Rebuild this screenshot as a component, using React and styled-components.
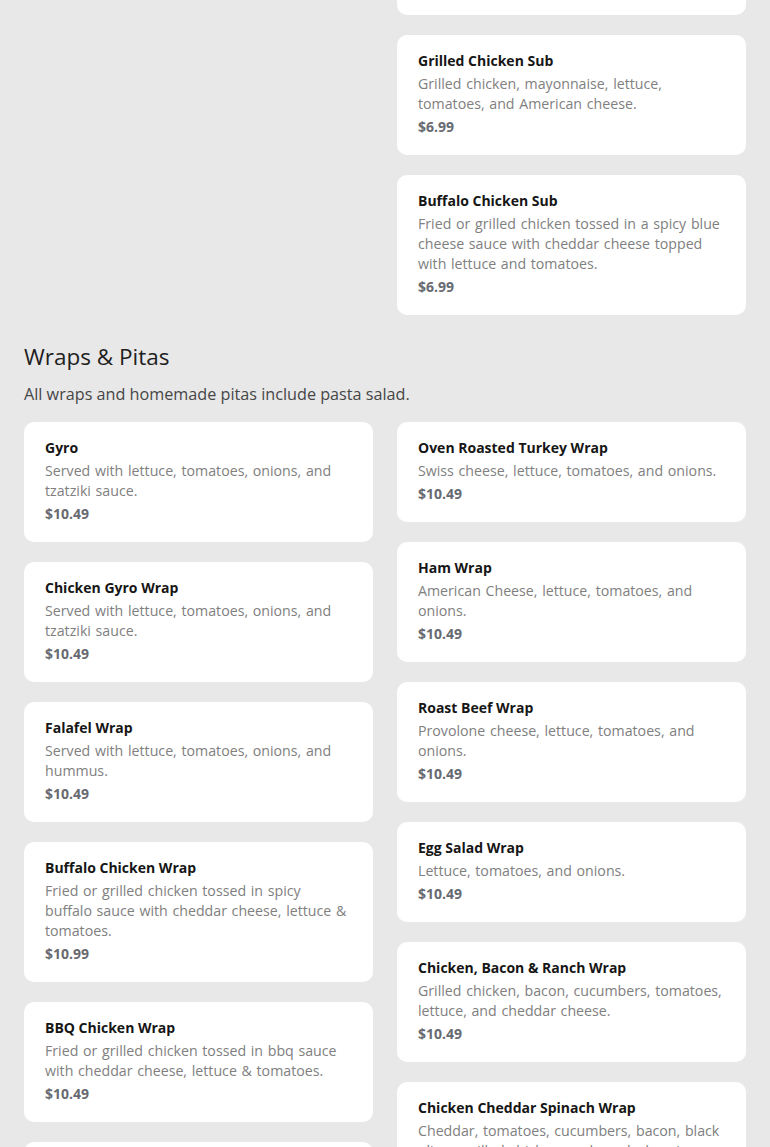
import React from 'react';
import styled, { createGlobalStyle } from 'styled-components';

const GlobalStyle = createGlobalStyle`
  html, body {
    margin: 0;
    padding: 0;
    background: #e8e8e8;
    font-family: "Open Sans", "Liberation Sans", sans-serif;
    overflow: hidden;
  }
`;

const sections = [
  {
    title: 'Subs',
    note: 'All subs include chips.',
    left: [
      { name: 'Turkey Sub', desc: 'Turkey, lettuce, tomatoes, and onions.', price: '$6.99' },
      { name: 'Ham Sub', desc: 'Ham, lettuce, tomatoes, and onions.', price: '$6.99' },
    ],
    right: [
      { name: 'Philly Cheesesteak Sub', desc: 'Steak, grilled onions, peppers, and provolone cheese.', price: '$7.49' },
      { name: 'Italian Sub', desc: 'Ham, salami, pepperoni, and provolone.', price: '$6.99' },
      { name: 'Grilled Chicken Sub', desc: 'Grilled chicken, mayonnaise, lettuce, tomatoes, and American cheese.', price: '$6.99' },
      { name: 'Buffalo Chicken Sub', desc: 'Fried or grilled chicken tossed in a spicy blue cheese sauce with cheddar cheese topped with lettuce and tomatoes.', price: '$6.99' },
    ],
  },
  {
    title: 'Wraps & Pitas',
    note: 'All wraps and homemade pitas include pasta salad.',
    left: [
      { name: 'Gyro', desc: 'Served with lettuce, tomatoes, onions, and tzatziki sauce.', price: '$10.49' },
      { name: 'Chicken Gyro Wrap', desc: 'Served with lettuce, tomatoes, onions, and tzatziki sauce.', price: '$10.49' },
      { name: 'Falafel Wrap', desc: 'Served with lettuce, tomatoes, onions, and hummus.', price: '$10.49' },
      { name: 'Buffalo Chicken Wrap', desc: 'Fried or grilled chicken tossed in spicy buffalo sauce with cheddar cheese, lettuce & tomatoes.', price: '$10.99' },
      { name: 'BBQ Chicken Wrap', desc: 'Fried or grilled chicken tossed in bbq sauce with cheddar cheese, lettuce & tomatoes.', price: '$10.49' },
      { name: 'Chicken Caesar Wrap', desc: 'Grilled chicken, romaine, parmesan, and caesar dressing.', price: '$10.49' },
    ],
    right: [
      { name: 'Oven Roasted Turkey Wrap', desc: 'Swiss cheese, lettuce, tomatoes, and onions.', price: '$10.49' },
      { name: 'Ham Wrap', desc: 'American Cheese, lettuce, tomatoes, and onions.', price: '$10.49' },
      { name: 'Roast Beef Wrap', desc: 'Provolone cheese, lettuce, tomatoes, and onions.', price: '$10.49' },
      { name: 'Egg Salad Wrap', desc: 'Lettuce, tomatoes, and onions.', price: '$10.49' },
      { name: 'Chicken, Bacon & Ranch Wrap', desc: 'Grilled chicken, bacon, cucumbers, tomatoes, lettuce, and cheddar cheese.', price: '$10.49' },
      { name: 'Chicken Cheddar Spinach Wrap', desc: 'Cheddar, tomatoes, cucumbers, bacon, black olives, grilled chicken, and ranch dressing.', price: '$10.49' },
    ],
  },
];

// page is shown scrolled part way down the menu
const Page = styled.main`
  margin-top: -306px;
  padding: 0 24px;
  display: flex;
  flex-direction: column;
  gap: 26px;
`;

const Section = styled.section`
  display: flex;
  flex-direction: column;
`;

const Heading = styled.h2`
  margin: 0;
  font-size: 22.5px;
  line-height: 32px;
  font-weight: 400;
  color: #1f1f1f;
`;

const Note = styled.p`
  margin: 9px 0 16px;
  font-size: 16.2px;
  line-height: 24px;
  color: #464646;
`;

const Columns = styled.div`
  display: grid;
  grid-template-columns: 1fr 1fr;
  gap: 24px;
  align-items: start;
`;

const Column = styled.div`
  display: flex;
  flex-direction: column;
  gap: 20px;
`;

const Card = styled.div`
  background: #fff;
  border-radius: 10px;
  padding: 16px 23px 18px 21px;
`;

const Name = styled.div`
  font-size: 14px;
  line-height: 20px;
  font-weight: 700;
  color: #161616;
  margin-bottom: 3px;
`;

const Desc = styled.div`
  font-size: 14.2px;
  word-spacing: 1px;
  line-height: 20px;
  color: #808080;
  margin-bottom: 3px;
`;

const Price = styled.div`
  font-size: 14px;
  line-height: 20px;
  font-weight: 700;
  color: #676a70;
`;

const Item = ({ item }) => (
  <Card>
    <Name>{item.name}</Name>
    <Desc>{item.desc}</Desc>
    <Price>{item.price}</Price>
  </Card>
);

const App = () => (
  <>
    <GlobalStyle />
    <Page>
      {sections.map((s) => (
        <Section key={s.title}>
          <Heading>{s.title}</Heading>
          <Note>{s.note}</Note>
          <Columns>
            <Column>
              {s.left.map((it) => <Item key={it.name} item={it} />)}
            </Column>
            <Column>
              {s.right.map((it) => <Item key={it.name} item={it} />)}
            </Column>
          </Columns>
        </Section>
      ))}
    </Page>
  </>
);

export default App;
